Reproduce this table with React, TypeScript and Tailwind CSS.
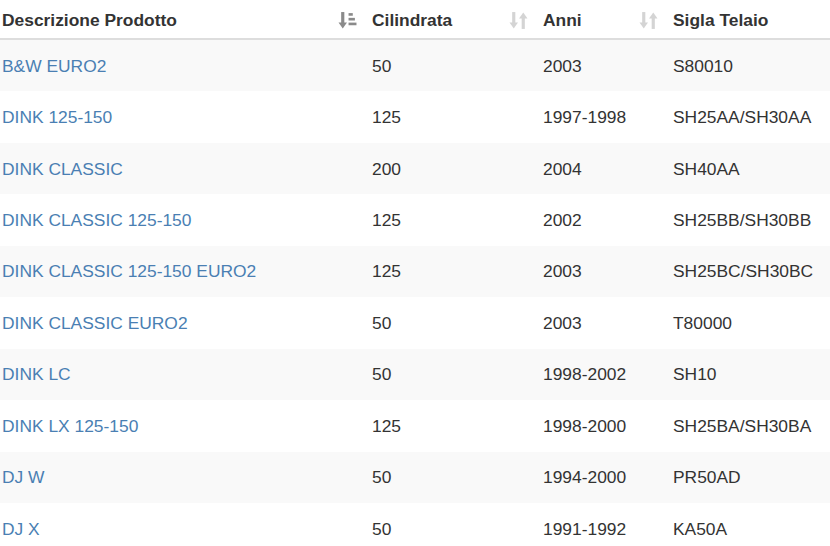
import React from 'react';

const rows = [
    ['B&W EURO2', '50', '2003', 'S80010'],
    ['DINK 125-150', '125', '1997-1998', 'SH25AA/SH30AA'],
    ['DINK CLASSIC', '200', '2004', 'SH40AA'],
    ['DINK CLASSIC 125-150', '125', '2002', 'SH25BB/SH30BB'],
    ['DINK CLASSIC 125-150 EURO2', '125', '2003', 'SH25BC/SH30BC'],
    ['DINK CLASSIC EURO2', '50', '2003', 'T80000'],
    ['DINK LC', '50', '1998-2002', 'SH10'],
    ['DINK LX 125-150', '125', '1998-2000', 'SH25BA/SH30BA'],
    ['DJ W', '50', '1994-2000', 'PR50AD'],
    ['DJ X', '50', '1991-1992', 'KA50A'],
];

// active sort icon: arrow down + stacked bars
const SortActive = () => (
    <svg width="19" height="19" viewBox="0 0 18 18" className="text-[#8a8a8a]" fill="currentColor">
        <rect x="3" y="1" width="3" height="11" />
        <path d="M0.5 11 L8.5 11 L4.5 16.5 Z" />
        <rect x="10" y="2" width="4" height="2.5" />
        <rect x="10" y="6.5" width="6" height="2.5" />
        <rect x="10" y="11" width="7.5" height="2.5" />
    </svg>
);

// inactive sort icon: arrow down + arrow up
const SortIdle = () => (
    <svg width="19" height="19" viewBox="0 0 18 18" className="text-[#d4d4d4]" fill="currentColor">
        <rect x="3" y="1" width="3" height="11" />
        <path d="M0.5 11 L8.5 11 L4.5 16.5 Z" />
        <rect x="12" y="6" width="3" height="11" />
        <path d="M9.5 7 L17.5 7 L13.5 1.5 Z" />
    </svg>
);

const cols = 'grid grid-cols-[362px_171px_130px_1fr]';

export default function App() {
    return (
        <div className="w-[830px] h-[546px] overflow-hidden bg-white text-[17.4px] text-[#333] font-['Liberation_Sans',Arial,sans-serif]">
            <div className={`${cols} h-[40px] pt-[2px] border-b-2 border-[#ddd] font-bold`}>
                <div className="flex items-center justify-between pl-[2px] pr-[5px]">
                    <span>Descrizione Prodotto</span>
                    <SortActive />
                </div>
                <div className="flex items-center justify-between pl-[10px] pr-[5px]">
                    <span>Cilindrata</span>
                    <SortIdle />
                </div>
                <div className="flex items-center justify-between pl-[10px] pr-[5px]">
                    <span>Anni</span>
                    <SortIdle />
                </div>
                <div className="flex items-center pl-[10px]">
                    <span>Sigla Telaio</span>
                </div>
            </div>
            {rows.map((r, i) => (
                <div key={i} className={`${cols} h-[51.45px] items-center ${i % 2 === 0 ? 'bg-[#f9f9f9]' : 'bg-white'}`}>
                    <div className="pl-[2px] text-[#4a7fb3]">{r[0]}</div>
                    <div className="pl-[10px]">{r[1]}</div>
                    <div className="pl-[10px]">{r[2]}</div>
                    <div className="pl-[10px]">{r[3]}</div>
                </div>
            ))}
        </div>
    );
}
